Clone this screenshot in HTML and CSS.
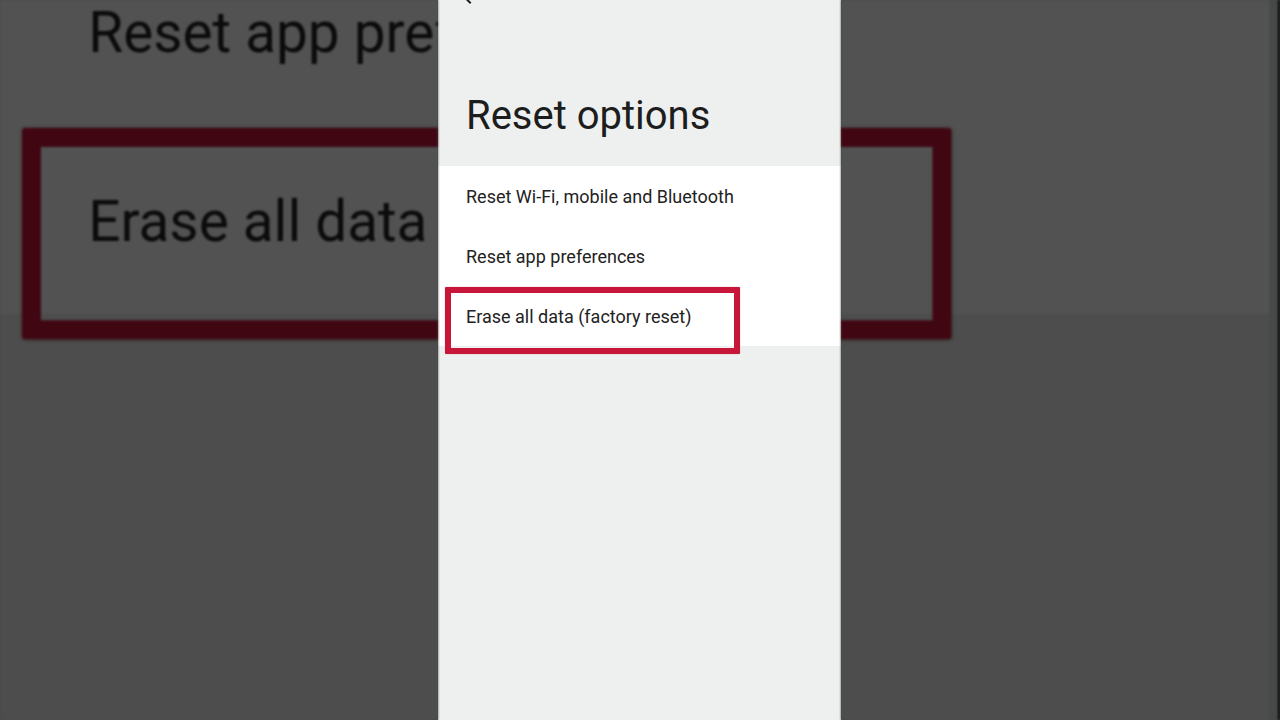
FILE: index.html
```html
<!DOCTYPE html>
<html lang="en">
<head>
  <meta charset="UTF-8" />
  <meta name="viewport" content="width=device-width, initial-scale=1.0"/>
  <title>Reset options</title>
  <link rel="stylesheet" href="styles.css">
</head>
<body>
  <main class="stage">
    <!-- left side: blown-up, dimmed copy of the screen -->
    <div class="side left" aria-hidden="true">
      <div class="screen zoomed">
        <header class="top">
          <svg class="back" viewBox="0 0 24 24"><path d="M20 11H7.83l5.59-5.59L12 4l-8 8 8 8 1.41-1.41L7.83 13H20v-2z"/></svg>
          <h1>Reset options</h1>
        </header>
        <ul class="list">
          <li>Reset Wi-Fi, mobile and Bluetooth</li>
          <li>Reset app preferences</li>
          <li class="picked">Erase all data<span class="mark"></span></li>
        </ul>
      </div>
    </div>

    <div class="screen">
      <header class="top">
        <svg class="back" viewBox="0 0 24 24"><path d="M20 11H7.83l5.59-5.59L12 4l-8 8 8 8 1.41-1.41L7.83 13H20v-2z"/></svg>
        <h1>Reset options</h1>
      </header>
      <ul class="list">
        <li>Reset Wi-Fi, mobile and Bluetooth</li>
        <li>Reset app preferences</li>
        <li class="picked">Erase all data (factory reset)<span class="mark"></span></li>
      </ul>
    </div>

    <!-- right side: same copy, only the empty part of the rows shows here -->
    <div class="side right" aria-hidden="true">
      <div class="screen zoomed">
        <header class="top"></header>
        <ul class="list">
          <li></li>
          <li></li>
          <li class="picked"><span class="mark"></span></li>
        </ul>
      </div>
    </div>
  </main>
</body>
</html>
```

FILE: styles.css
```css
body {
  margin: 0;
  width: 1280px;
  height: 720px;
  overflow: hidden;
  background: #474948;
  font-family: Roboto, "Noto Sans", sans-serif;
}

.stage {
  display: grid;
  grid-template-columns: 438px 403px 1fr;
  height: 720px;
}

.side {
  overflow: hidden;
  filter: brightness(0.32) blur(1px);
}

.side.right {
  border-right: 2px solid #000;
}

.zoomed {
  transform-origin: 0 0;
  transform: translate(0px, -776px) scale(3.15);
}

.right .zoomed {
  transform: translate(-841px, -776px) scale(3.15);
}

.screen {
  width: 403px;
  height: 720px;
  background: #eef0ef;
  overflow: hidden;
  color: #1d1d1d;
}

.top {
  height: 166px;
  box-sizing: border-box;
  padding: 0 0 0 28px;
  display: flex;
  flex-direction: column;
}

.back {
  width: 24px;
  height: 24px;
  margin: -16px 0 0 -8px;
  fill: #1d1d1d;
}

.top h1 {
  margin: 84px 0 0;
  font-size: 40px;
  font-weight: 400;
  line-height: 48px;
}

.list {
  list-style: none;
  margin: 0;
  padding: 0;
  background: #fff;
}

.list li {
  height: 60px;
  padding-left: 28px;
  display: flex;
  align-items: center;
  font-size: 18px;
  color: #222;
}

.list li.picked {
  position: relative;
}

/* red highlight drawn over the last row */
.mark {
  position: absolute;
  left: 7px;
  top: 1px;
  width: 283px;
  height: 55px;
  border: 6px solid #c8163b;
  border-radius: 1px;
  box-shadow: 0 0 1px rgba(120, 0, 20, 0.6);
}
```
